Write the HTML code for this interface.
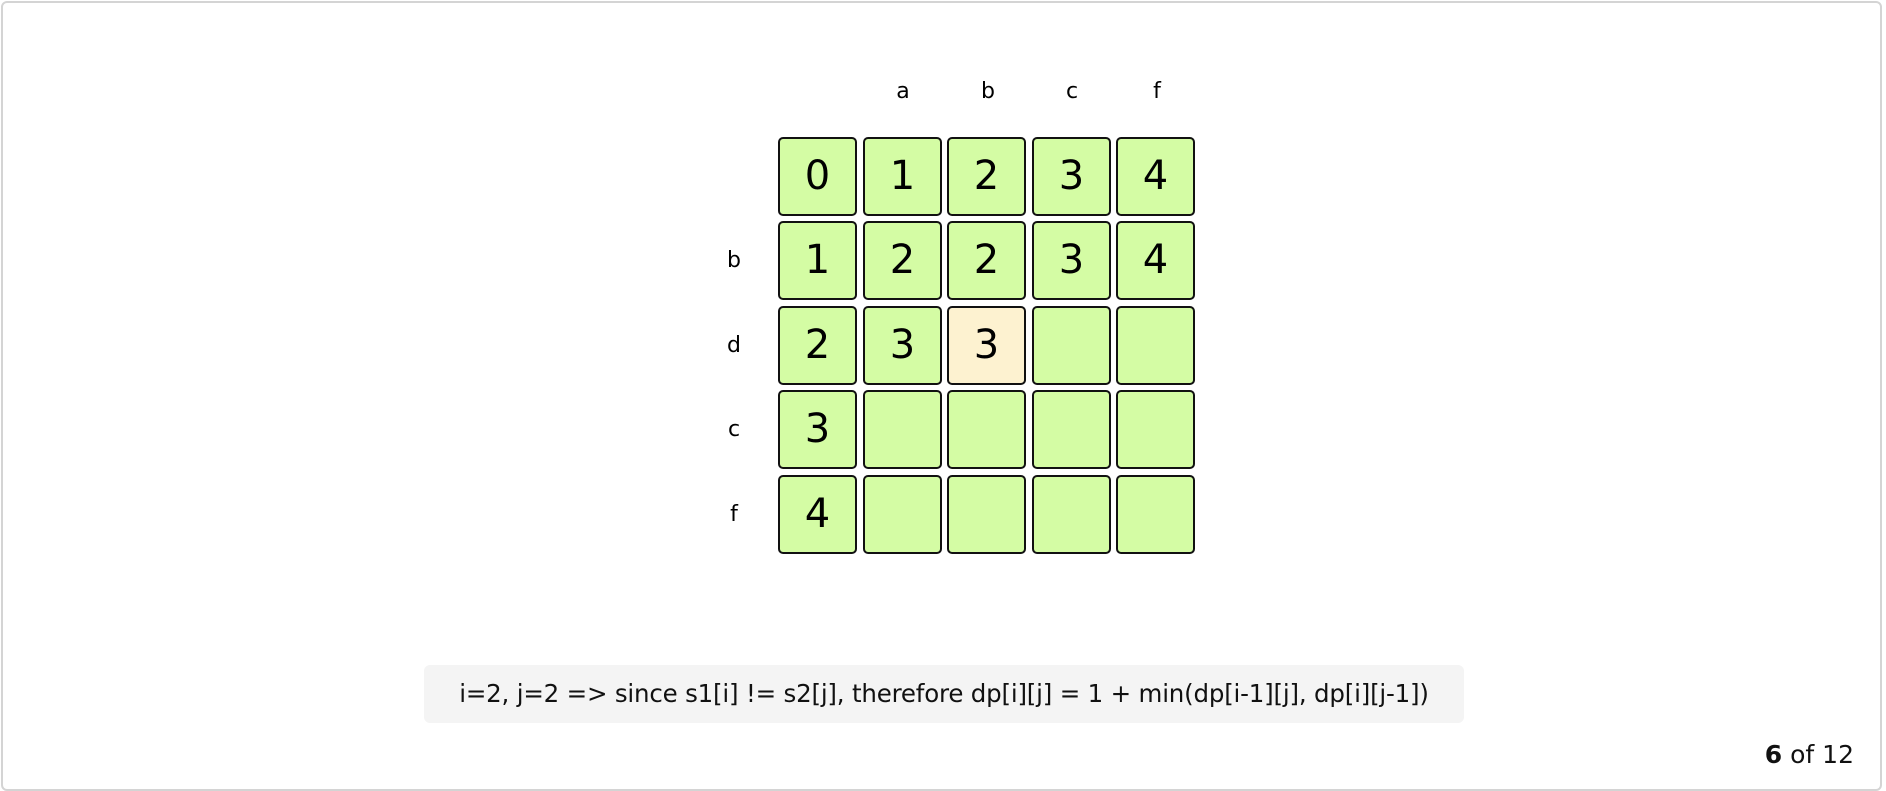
<!DOCTYPE html>
<html><head><style>
html,body{margin:0;padding:0;background:#fff;}
body{width:1886px;height:788px;position:relative;overflow:hidden;font-family:"DejaVu Sans","Liberation Sans",sans-serif;}
.frame{position:absolute;left:1px;top:1px;width:1881px;height:790px;border:2px solid #d4d4d4;border-radius:6px;box-sizing:border-box;}
.cell{position:absolute;width:79px;height:79px;box-sizing:border-box;border:2px solid #111;border-radius:5px;background:#d4fca4;font-size:40px;line-height:75px;text-align:center;color:#000;}
.hl{background:#fdf2d0;}
.lbl{position:absolute;font-size:22px;color:#000;width:40px;text-align:center;line-height:24px;}
.msg{position:absolute;left:424px;top:665px;width:1040px;height:58px;background:#f4f4f4;border-radius:6px;font-size:24.5px;line-height:58px;text-align:center;color:#111;letter-spacing:-0.2px;}
.pg{position:absolute;right:32px;top:740px;font-size:25px;color:#111;}
</style></head><body>
<div class="frame"></div>
<div class="lbl" style="left:883px;top:80px">a</div>
<div class="lbl" style="left:968px;top:80px">b</div>
<div class="lbl" style="left:1052px;top:80px">c</div>
<div class="lbl" style="left:1137px;top:80px">f</div>
<div class="lbl" style="left:714px;top:249px">b</div>
<div class="lbl" style="left:714px;top:334px">d</div>
<div class="lbl" style="left:714px;top:418px">c</div>
<div class="lbl" style="left:714px;top:503px">f</div>

<div class="cell" style="left:778px;top:137px">0</div>
<div class="cell" style="left:863px;top:137px">1</div>
<div class="cell" style="left:947px;top:137px">2</div>
<div class="cell" style="left:1032px;top:137px">3</div>
<div class="cell" style="left:1116px;top:137px">4</div>

<div class="cell" style="left:778px;top:221px">1</div>
<div class="cell" style="left:863px;top:221px">2</div>
<div class="cell" style="left:947px;top:221px">2</div>
<div class="cell" style="left:1032px;top:221px">3</div>
<div class="cell" style="left:1116px;top:221px">4</div>

<div class="cell" style="left:778px;top:306px">2</div>
<div class="cell" style="left:863px;top:306px">3</div>
<div class="cell hl" style="left:947px;top:306px">3</div>
<div class="cell" style="left:1032px;top:306px"></div>
<div class="cell" style="left:1116px;top:306px"></div>

<div class="cell" style="left:778px;top:390px">3</div>
<div class="cell" style="left:863px;top:390px"></div>
<div class="cell" style="left:947px;top:390px"></div>
<div class="cell" style="left:1032px;top:390px"></div>
<div class="cell" style="left:1116px;top:390px"></div>

<div class="cell" style="left:778px;top:475px">4</div>
<div class="cell" style="left:863px;top:475px"></div>
<div class="cell" style="left:947px;top:475px"></div>
<div class="cell" style="left:1032px;top:475px"></div>
<div class="cell" style="left:1116px;top:475px"></div>

<div class="msg">i=2, j=2 =&gt; since s1[i] != s2[j], therefore dp[i][j] = 1 + min(dp[i-1][j], dp[i][j-1])</div>
<div class="pg"><b>6</b> of 12</div>
</body></html>
